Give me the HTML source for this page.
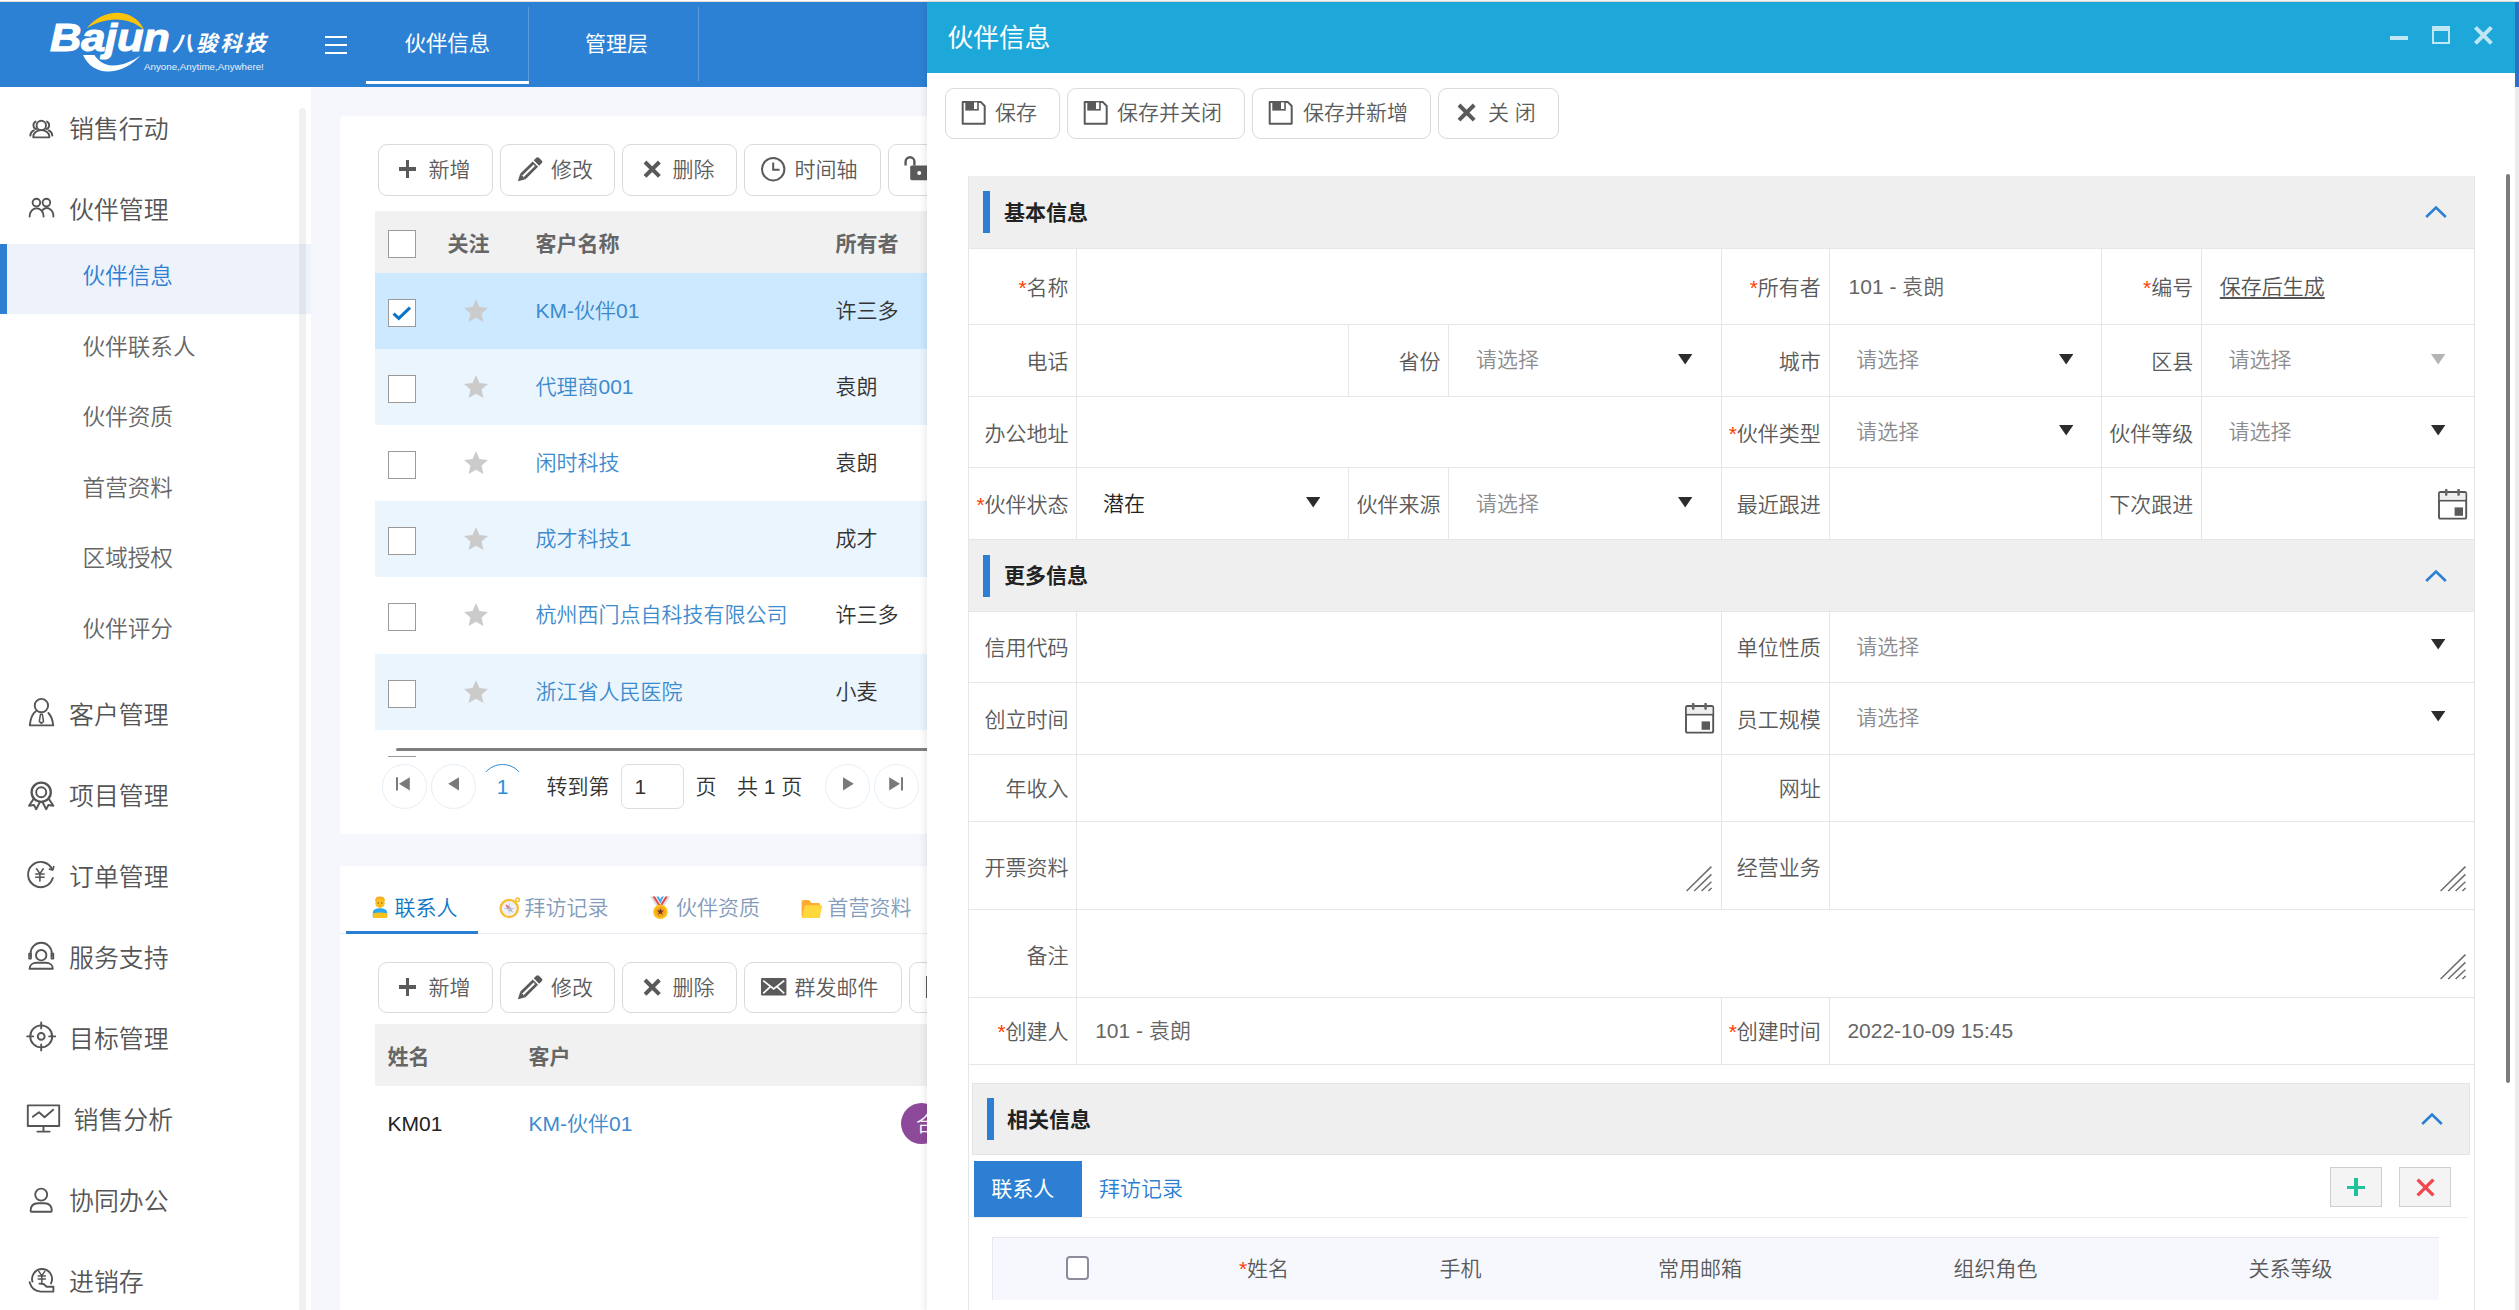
<!DOCTYPE html>
<html lang="zh-CN"><head><meta charset="utf-8"><title>伙伴信息</title>
<style>
*{box-sizing:border-box;margin:0;padding:0}
html,body{width:2519px;height:1310px;overflow:hidden;background:#fff}
body{font-weight:350;font-family:"Liberation Sans","Noto Sans CJK SC",sans-serif;position:relative;color:#555}
div,svg,header,aside,main,section{position:absolute}
header,aside,main,section{left:0;top:0;width:2519px;height:1310px}
.t{white-space:nowrap}
.btn{border:1px solid #dadada;border-radius:9px;background:#fff}
.r{color:#ff3d00}
</style></head>
<body>
<main>
<div style="left:311px;top:87px;width:2208px;height:1223px;background:#f5f7fc"></div>
<div style="left:340px;top:116px;width:1900px;height:718px;background:#fff;border-radius:5px 5px 0 0"></div>
<div class="btn" style="left:378px;top:144px;width:115px;height:52px;"></div><div style="left:398.8px;top:167.2px;width:17.4px;height:3.6px;background:#5a5a5a"></div><div style="left:405.7px;top:160.3px;width:3.6px;height:17.4px;background:#5a5a5a"></div><div class="t" style="top:149.5px;height:40px;line-height:40px;font-size:21px;color:#5c5c5c;left:428.5px;">新增</div>
<div class="btn" style="left:500px;top:144px;width:115px;height:52px;"></div><svg style="left:516.5px;top:156.6px;" width="27" height="26" viewBox="0 0 27 26"><g transform="translate(0.9,24.3) rotate(-44.5) scale(.935)" fill="#5a5a5a"><path d="M0 0L7.4 -4.1V4.1Z"/><path d="M7.4 -4.1H26.2V4.1H7.4Z M6.6 -1.1V1.1H24.6V-1.1Z" fill-rule="evenodd"/><path d="M27.8 -4.1H31.6Q33.8 -4.1 33.8 -1.9V1.9Q33.8 4.1 31.6 4.1H27.8Z"/></g></svg><div class="t" style="top:149.5px;height:40px;line-height:40px;font-size:21px;color:#5c5c5c;left:551px;">修改</div>
<div class="btn" style="left:622px;top:144px;width:115px;height:52px;"></div><svg style="left:642.5px;top:159.60000000000002px;" width="18.4" height="18.4" viewBox="0 0 18.4 18.4"><path d="M2 2L16.4 16.4M16.4 2L2 16.4" stroke="#5a5a5a" stroke-width="4" fill="none"/></svg><div class="t" style="top:149.5px;height:40px;line-height:40px;font-size:21px;color:#5c5c5c;left:672.5px;">删除</div>
<div class="btn" style="left:744px;top:144px;width:137px;height:52px;"></div><svg style="left:760.0px;top:155.70000000000002px;" width="26.4" height="26.4" viewBox="0 0 26.4 26.4"><circle cx="13.2" cy="13.2" r="11.2" fill="none" stroke="#5a5a5a" stroke-width="2"/><path d="M13.2 6.6V13.799999999999999H19.6" fill="none" stroke="#5a5a5a" stroke-width="2"/></svg><div class="t" style="top:149.5px;height:40px;line-height:40px;font-size:21px;color:#5c5c5c;left:794.6px;">时间轴</div>
<div class="btn" style="left:888px;top:144px;width:137px;height:52px;"></div><svg style="left:904.4px;top:156.4px;" width="30" height="26" viewBox="0 0 30 26"><path d="M1.6 9.6V5.6a4.4 4.4 0 0 1 8.8 0v4" fill="none" stroke="#5a5a5a" stroke-width="2.4"/><rect x="6.2" y="9.6" width="20" height="14.6" rx="1.6" fill="#5a5a5a"/><circle cx="15.2" cy="17" r="2" fill="#fff"/></svg><div class="t" style="top:150.0px;height:40px;line-height:40px;font-size:21px;color:#5c5c5c;left:950px;"></div>
<div style="left:375px;top:211px;width:1800px;height:62px;background:#f1f1f1"></div>
<div style="left:388px;top:230px;width:28px;height:28px;background:#fff;border:1.5px solid #9a9a9a"></div>
<div class="t" style="top:223.5px;height:40px;line-height:40px;font-size:21px;color:#666;font-weight:700;left:447.5px;">关注</div>
<div class="t" style="top:223.5px;height:40px;line-height:40px;font-size:21px;color:#666;font-weight:700;left:535.5px;">客户名称</div>
<div class="t" style="top:223.5px;height:40px;line-height:40px;font-size:21px;color:#666;font-weight:700;left:835.5px;">所有者</div>
<div style="left:375px;top:273px;width:1800px;height:76px;background:#cde9ff"></div>
<div style="left:388px;top:299px;width:28px;height:28px;background:#fff;border:1.5px solid #9a9a9a"></div><svg style="left:388px;top:299px;" width="28" height="28" viewBox="0 0 28 28"><path d="M5.6 14.6L10.8 19.4L22 8.6" fill="none" stroke="#0d76c9" stroke-width="3.2"/></svg>
<svg style="left:463.8px;top:298.6px;" width="24" height="24" viewBox="0 0 24 24"><path d="M12.0 0.2L15.5 8.0L24.0 8.9L17.6 14.6L19.4 23.0L12.0 18.7L4.6 23.0L6.4 14.6L0.0 8.9L8.5 8.0Z" fill="#cbcbcb"/></svg>
<div class="t" style="top:291.0px;height:40px;line-height:40px;font-size:21px;color:#3d8bcd;left:535.5px;">KM-伙伴01</div>
<div class="t" style="top:291.0px;height:40px;line-height:40px;font-size:21px;color:#333;left:835.5px;">许三多</div>
<div style="left:375px;top:349px;width:1800px;height:76px;background:#ebf5fe"></div>
<div style="left:388px;top:375px;width:28px;height:28px;background:#fff;border:1.5px solid #9a9a9a"></div>
<svg style="left:463.8px;top:374.6px;" width="24" height="24" viewBox="0 0 24 24"><path d="M12.0 0.2L15.5 8.0L24.0 8.9L17.6 14.6L19.4 23.0L12.0 18.7L4.6 23.0L6.4 14.6L0.0 8.9L8.5 8.0Z" fill="#cbcbcb"/></svg>
<div class="t" style="top:367.0px;height:40px;line-height:40px;font-size:21px;color:#3d8bcd;left:535.5px;">代理商001</div>
<div class="t" style="top:367.0px;height:40px;line-height:40px;font-size:21px;color:#333;left:835.5px;">袁朗</div>
<div style="left:375px;top:425px;width:1800px;height:76px;background:#fff"></div>
<div style="left:388px;top:451px;width:28px;height:28px;background:#fff;border:1.5px solid #9a9a9a"></div>
<svg style="left:463.8px;top:450.6px;" width="24" height="24" viewBox="0 0 24 24"><path d="M12.0 0.2L15.5 8.0L24.0 8.9L17.6 14.6L19.4 23.0L12.0 18.7L4.6 23.0L6.4 14.6L0.0 8.9L8.5 8.0Z" fill="#cbcbcb"/></svg>
<div class="t" style="top:443.0px;height:40px;line-height:40px;font-size:21px;color:#3d8bcd;left:535.5px;">闲时科技</div>
<div class="t" style="top:443.0px;height:40px;line-height:40px;font-size:21px;color:#333;left:835.5px;">袁朗</div>
<div style="left:375px;top:501px;width:1800px;height:76px;background:#ebf5fe"></div>
<div style="left:388px;top:527px;width:28px;height:28px;background:#fff;border:1.5px solid #9a9a9a"></div>
<svg style="left:463.8px;top:526.6px;" width="24" height="24" viewBox="0 0 24 24"><path d="M12.0 0.2L15.5 8.0L24.0 8.9L17.6 14.6L19.4 23.0L12.0 18.7L4.6 23.0L6.4 14.6L0.0 8.9L8.5 8.0Z" fill="#cbcbcb"/></svg>
<div class="t" style="top:519.0px;height:40px;line-height:40px;font-size:21px;color:#3d8bcd;left:535.5px;">成才科技1</div>
<div class="t" style="top:519.0px;height:40px;line-height:40px;font-size:21px;color:#333;left:835.5px;">成才</div>
<div style="left:375px;top:577px;width:1800px;height:76px;background:#fff"></div>
<div style="left:388px;top:603px;width:28px;height:28px;background:#fff;border:1.5px solid #9a9a9a"></div>
<svg style="left:463.8px;top:602.6px;" width="24" height="24" viewBox="0 0 24 24"><path d="M12.0 0.2L15.5 8.0L24.0 8.9L17.6 14.6L19.4 23.0L12.0 18.7L4.6 23.0L6.4 14.6L0.0 8.9L8.5 8.0Z" fill="#cbcbcb"/></svg>
<div class="t" style="top:595.0px;height:40px;line-height:40px;font-size:21px;color:#3d8bcd;left:535.5px;">杭州西门点自科技有限公司</div>
<div class="t" style="top:595.0px;height:40px;line-height:40px;font-size:21px;color:#333;left:835.5px;">许三多</div>
<div style="left:375px;top:654px;width:1800px;height:76px;background:#ebf5fe"></div>
<div style="left:388px;top:680px;width:28px;height:28px;background:#fff;border:1.5px solid #9a9a9a"></div>
<svg style="left:463.8px;top:679.6px;" width="24" height="24" viewBox="0 0 24 24"><path d="M12.0 0.2L15.5 8.0L24.0 8.9L17.6 14.6L19.4 23.0L12.0 18.7L4.6 23.0L6.4 14.6L0.0 8.9L8.5 8.0Z" fill="#cbcbcb"/></svg>
<div class="t" style="top:672.0px;height:40px;line-height:40px;font-size:21px;color:#3d8bcd;left:535.5px;">浙江省人民医院</div>
<div class="t" style="top:672.0px;height:40px;line-height:40px;font-size:21px;color:#333;left:835.5px;">小麦</div>
<div style="left:396px;top:747.6px;width:1800px;height:3.4px;background:#7f7f7f;border-radius:2px"></div>
<div style="left:388px;top:755.6px;width:28px;height:1.2px;background:#9a9a9a"></div>
<div style="left:382px;top:764px;width:44.6px;height:44.6px;border:1px solid #e6eff8;border-radius:50%"></div>
<div style="left:431px;top:764px;width:44.6px;height:44.6px;border:1px solid #e6eff8;border-radius:50%"></div>
<div style="left:825px;top:764px;width:44.6px;height:44.6px;border:1px solid #e6eff8;border-radius:50%"></div>
<div style="left:874px;top:764px;width:44.6px;height:44.6px;border:1px solid #e6eff8;border-radius:50%"></div>
<svg style="left:396px;top:776px;" width="16" height="16" viewBox="0 0 16 16"><path d="M1 1.2V14.4" stroke="#7a7a7a" stroke-width="2" fill="none"/><path d="M13.8 1.200000000000001V14.4L3 7.8Z" fill="#7a7a7a"/></svg>
<svg style="left:446px;top:776px;" width="16" height="16" viewBox="0 0 16 16"><path d="M13 1.2V14.4L2.2 7.8Z" fill="#7a7a7a"/></svg>
<svg style="left:841px;top:776px;" width="16" height="16" viewBox="0 0 16 16"><path d="M2 1.2V14.4L12.8 7.8Z" fill="#7a7a7a"/></svg>
<svg style="left:888px;top:776px;" width="16" height="16" viewBox="0 0 16 16"><path d="M14 1.2V14.4" stroke="#7a7a7a" stroke-width="2" fill="none"/><path d="M1.2 1.2V14.4L12 7.8Z" fill="#7a7a7a"/></svg>
<div style="left:480.2px;top:764px;width:44.6px;height:8.4px;overflow:hidden"><div style="left:0;top:0;width:44.6px;height:44.6px;border:1.4px solid #2b8fd8;border-radius:50%"></div></div>
<div class="t" style="top:766.5px;height:40px;line-height:40px;font-size:21px;color:#2b8fd8;left:482.6px;width:40px;text-align:center;">1</div>
<div class="t" style="top:766.5px;height:40px;line-height:40px;font-size:21px;color:#333;left:546.5px;">转到第</div>
<div style="left:621px;top:764px;width:63px;height:44.6px;border:1px solid #ddd;border-radius:7px;background:#fff"></div>
<div class="t" style="top:766.5px;height:40px;line-height:40px;font-size:21px;color:#333;left:634.5px;">1</div>
<div class="t" style="top:766.5px;height:40px;line-height:40px;font-size:21px;color:#333;left:695.5px;">页</div>
<div class="t" style="top:766.5px;height:40px;line-height:40px;font-size:21px;color:#333;left:737px;">共 1 页</div>
<div style="left:340px;top:866px;width:1900px;height:460px;background:#fff"></div>
<div style="left:340px;top:933px;width:1900px;height:1px;background:#e9edf5"></div>
<div style="left:346px;top:931px;width:132px;height:3px;background:#2b7fd3"></div>
<div class="t" style="top:887.5px;height:40px;line-height:40px;font-size:21px;color:#0f76c6;left:394.5px;">联系人</div>
<div class="t" style="top:887.5px;height:40px;line-height:40px;font-size:21px;color:#849cba;left:524.4px;">拜访记录</div>
<div class="t" style="top:887.5px;height:40px;line-height:40px;font-size:21px;color:#849cba;left:676px;">伙伴资质</div>
<div class="t" style="top:887.5px;height:40px;line-height:40px;font-size:21px;color:#849cba;left:827.6px;">首营资料</div>
<svg style="left:372px;top:896px;" width="17" height="23" viewBox="0 0 17 23"><path d="M3.2 5.2Q2.6 .8 8 .6Q13.4 .8 12.8 5.2Z" fill="#f9a825"/><circle cx="8" cy="7.2" r="4.7" fill="#fcc21b"/><circle cx="6.2" cy="7" r=".7" fill="#6d4c41"/><circle cx="9.8" cy="7" r=".7" fill="#6d4c41"/><path d="M7.2 9.2h1.6v1h-1.6z" fill="#ef7f5a"/><path d="M.8 21.6V16.8Q.8 12.2 8 12.2Q15.2 12.2 15.2 16.8V21.6Z" fill="#29a9f2"/><path d="M.8 17.4Q8 15.6 15.2 17.4V21.4Q8 22.6 .8 21.4Z" fill="#fcc21b"/></svg>
<svg style="left:498px;top:896px;" width="23" height="23" viewBox="0 0 23 23"><circle cx="11.2" cy="12.4" r="8.6" fill="#eef2f8" stroke="#f9bc2d" stroke-width="2.3"/><circle cx="19.6" cy="3.8" r="1.8" fill="#fff" stroke="#f9bc2d" stroke-width="1.4"/><path d="M7.4 8.2L12.2 11L9.8 13.6Z" fill="#ef4a5b"/><path d="M15.2 16.8L9.8 13.6L12.2 11Z" fill="#a9b4c8"/><path d="M11.2 6.6L12.2 11.6H10.2ZM11.2 18.2L10.2 13.2H12.2ZM5.4 12.4L10.4 11.4V13.4ZM17 12.4L12 13.4V11.4Z" fill="#b8c2d4"/></svg>
<svg style="left:650.4px;top:895.6px;" width="21" height="24" viewBox="0 0 21 24"><path d="M.2 .6H5L10.6 9.4H6Z" fill="#d9dde3"/><path d="M2.6 .6H5L10.6 9.4H8.4Z" fill="#e8483f"/><path d="M20.2 .6H15.4L9.8 9.4H14.4Z" fill="#d9dde3"/><path d="M17.8 .6H15.4L9.8 9.4H12Z" fill="#e8483f"/><path d="M6.4 .6H8.6L11.6 5.6L10.4 7.4Z" fill="#4aa3ea"/><path d="M14 .6H11.8L9.6 4.2L10.8 6Z" fill="#4aa3ea"/><circle cx="10.4" cy="15.8" r="7.3" fill="#fcc21b"/><circle cx="10.4" cy="15.8" r="5.3" fill="#f7a51c"/><path d="M10.4 12.2L11.4 14.6H14L11.9 16.2L12.7 18.8L10.4 17.3L8.1 18.8L8.9 16.2L6.800000000000001 14.6H9.4Z" fill="#6d3b2a"/></svg>
<svg style="left:800.6px;top:899px;" width="23" height="20" viewBox="0 0 23 20"><path d="M.6 2.8Q.6 .9 2.5 .9H7.2Q8 .9 8.6 1.6L10.6 4H17.4Q19.200000000000003 4 19.200000000000003 5.8V17Q19.200000000000003 19 17.2 19H2.6Q.6 19 .6 17Z" fill="#ffac33"/><path d="M5.4 6.2H20Q21.8 6.2 21.3 8L18.7 17.6Q18.3 19 16.900000000000002 19H2.2Q.9 19 1.3 17.6L3.6 7.6Q4 6.2 5.4 6.2Z" fill="#ffd93b"/></svg>
<div class="btn" style="left:378px;top:962px;width:115px;height:51px;"></div><div style="left:398.8px;top:985.2px;width:17.4px;height:3.6px;background:#5a5a5a"></div><div style="left:405.7px;top:978.3px;width:3.6px;height:17.4px;background:#5a5a5a"></div><div class="t" style="top:967.5px;height:40px;line-height:40px;font-size:21px;color:#5c5c5c;left:428.5px;">新增</div>
<div class="btn" style="left:500px;top:962px;width:115px;height:51px;"></div><svg style="left:516.5px;top:974.6px;" width="27" height="26" viewBox="0 0 27 26"><g transform="translate(0.9,24.3) rotate(-44.5) scale(.935)" fill="#5a5a5a"><path d="M0 0L7.4 -4.1V4.1Z"/><path d="M7.4 -4.1H26.2V4.1H7.4Z M6.6 -1.1V1.1H24.6V-1.1Z" fill-rule="evenodd"/><path d="M27.8 -4.1H31.6Q33.8 -4.1 33.8 -1.9V1.9Q33.8 4.1 31.6 4.1H27.8Z"/></g></svg><div class="t" style="top:967.5px;height:40px;line-height:40px;font-size:21px;color:#5c5c5c;left:551px;">修改</div>
<div class="btn" style="left:622px;top:962px;width:115px;height:51px;"></div><svg style="left:642.5px;top:977.5999999999999px;" width="18.4" height="18.4" viewBox="0 0 18.4 18.4"><path d="M2 2L16.4 16.4M16.4 2L2 16.4" stroke="#5a5a5a" stroke-width="4" fill="none"/></svg><div class="t" style="top:967.5px;height:40px;line-height:40px;font-size:21px;color:#5c5c5c;left:672.5px;">删除</div>
<div class="btn" style="left:744px;top:962px;width:158px;height:51px;"></div><svg style="left:761px;top:978px;" width="26" height="18" viewBox="0 0 26 18"><rect x="0" y="0" width="25.4" height="17.6" rx="1.4" fill="#5a5a5a"/><path d="M2.2 2.6L12.7 11L23.2 2.6M2.2 15.4L9.4 8.6M23.2 15.4L16 8.6" stroke="#fff" stroke-width="1.7" fill="none"/></svg><div class="t" style="top:967.5px;height:40px;line-height:40px;font-size:21px;color:#5c5c5c;left:794.6px;">群发邮件</div>
<div class="btn" style="left:909px;top:962px;width:137px;height:51px;"></div><div style="left:926px;top:976px;width:2.4px;height:22px;background:#5a5a5a"></div><div class="t" style="top:967.5px;height:40px;line-height:40px;font-size:21px;color:#5c5c5c;left:950px;"></div>
<div style="left:375px;top:1024px;width:1800px;height:62px;background:#f1f1f1"></div>
<div class="t" style="top:1036.5px;height:40px;line-height:40px;font-size:21px;color:#666;font-weight:700;left:387.5px;">姓名</div>
<div class="t" style="top:1036.5px;height:40px;line-height:40px;font-size:21px;color:#666;font-weight:700;left:528.5px;">客户</div>
<div class="t" style="top:1103.5px;height:40px;line-height:40px;font-size:21px;color:#222;left:387.5px;">KM01</div>
<div class="t" style="top:1103.5px;height:40px;line-height:40px;font-size:21px;color:#3d8bcd;left:528.5px;">KM-伙伴01</div>
<div style="left:901px;top:1103px;width:41px;height:41px;background:#8e4a9a;border-radius:50%"></div>
<div class="t" style="top:1103.5px;height:40px;line-height:40px;font-size:21px;color:#fff;left:916px;">合</div>
</main>
<header>
<div style="left:0px;top:0px;width:2519px;height:1px;background:#fff"></div>
<div style="left:0px;top:1px;width:2519px;height:1px;background:#e4dedc"></div>
<div style="left:0px;top:2px;width:2519px;height:85px;background:#2d81d4"></div>
<svg style="left:0;top:0" width="320" height="87" viewBox="0 0 320 87">
<path d="M86.5 28.5 C96 16 112 10.5 124 13.5 C134 16 141 22 144 30 C136 23 127 19.5 116 19.5 C105 19.5 95 23 86.5 28.5Z" fill="#fcc30b"/>
<path d="M83 55 C88 66 98 72 109 71.5 C122 71 133 64 140.5 55.5 C131 62 121 66 112 65.5 C104 65 98 61 94.5 55Z" fill="#fff"/>
</svg>
<div class="t" style="left:50px;top:15px;height:44px;line-height:44px;font-size:39.5px;font-weight:700;font-style:italic;color:#fff;letter-spacing:-0.2px;-webkit-text-stroke:1.1px #fff;transform-origin:0 50%;transform:scaleX(1.1)">Bajun</div>
<div class="t" style="left:172px;top:26.5px;height:34px;line-height:34px;font-size:21.5px;font-weight:700;font-style:italic;color:#fff;letter-spacing:2.6px">八骏科技</div>
<div class="t" style="left:144px;top:59.5px;height:14px;line-height:14px;font-size:9.75px;color:#e8f1fb;">Anyone,Anytime,Anywhere!</div>
<div style="left:325px;top:35.5px;width:21.5px;height:2.6px;background:#fff"></div>
<div style="left:325px;top:43.5px;width:21.5px;height:2.6px;background:#fff"></div>
<div style="left:325px;top:51.5px;width:21.5px;height:2.6px;background:#fff"></div>
<div class="t" style="top:24.0px;height:40px;line-height:40px;font-size:21.4px;color:#fff;left:247.3px;width:400px;text-align:center;font-weight:400;">伙伴信息</div>
<div class="t" style="top:24.0px;height:40px;line-height:40px;font-size:21px;color:#fff;left:416.5px;width:400px;text-align:center;font-weight:400;">管理层</div>
<div style="left:528px;top:7px;width:1px;height:74px;background:rgba(255,255,255,.22)"></div>
<div style="left:698px;top:7px;width:1px;height:74px;background:rgba(255,255,255,.22)"></div>
<div style="left:366px;top:81px;width:163px;height:3px;background:#fff"></div>
</header>
<aside>
<div style="left:0px;top:87px;width:311px;height:1223px;background:#fff"></div>
<div style="left:0px;top:244px;width:311px;height:70px;background:#eef3fb"></div>
<div style="left:0px;top:244px;width:7px;height:70px;background:#2d7fd3"></div>
<div style="left:299px;top:108px;width:7px;height:1210px;background:rgba(0,0,0,.06);border-radius:4px"></div>
<div class="t" style="top:108.6px;height:40px;line-height:40px;font-size:24.9px;color:#555;left:69px;">销售行动</div>
<div class="t" style="top:189.5px;height:40px;line-height:40px;font-size:24.9px;color:#555;left:69px;">伙伴管理</div>
<div class="t" style="top:695.1px;height:40px;line-height:40px;font-size:24.9px;color:#555;left:69px;">客户管理</div>
<div class="t" style="top:776.4px;height:40px;line-height:40px;font-size:24.9px;color:#555;left:69px;">项目管理</div>
<div class="t" style="top:857.4px;height:40px;line-height:40px;font-size:24.9px;color:#555;left:69px;">订单管理</div>
<div class="t" style="top:938.4px;height:40px;line-height:40px;font-size:24.9px;color:#555;left:69px;">服务支持</div>
<div class="t" style="top:1019.4000000000001px;height:40px;line-height:40px;font-size:24.9px;color:#555;left:69px;">目标管理</div>
<div class="t" style="top:1100.4px;height:40px;line-height:40px;font-size:24.9px;color:#555;left:73.5px;">销售分析</div>
<div class="t" style="top:1181.4px;height:40px;line-height:40px;font-size:24.9px;color:#555;left:69px;">协同办公</div>
<div class="t" style="top:1262.4px;height:40px;line-height:40px;font-size:24.9px;color:#555;left:69px;">进销存</div>
<div class="t" style="top:257.0px;height:40px;line-height:40px;font-size:22.6px;color:#2d7fd3;left:82.6px;">伙伴信息</div>
<div class="t" style="top:328.3px;height:40px;line-height:40px;font-size:22.6px;color:#666;left:82.6px;">伙伴联系人</div>
<div class="t" style="top:398.3px;height:40px;line-height:40px;font-size:22.6px;color:#666;left:82.6px;">伙伴资质</div>
<div class="t" style="top:469.3px;height:40px;line-height:40px;font-size:22.6px;color:#666;left:82.6px;">首营资料</div>
<div class="t" style="top:539.3px;height:40px;line-height:40px;font-size:22.6px;color:#666;left:82.6px;">区域授权</div>
<div class="t" style="top:610.3px;height:40px;line-height:40px;font-size:22.6px;color:#666;left:82.6px;">伙伴评分</div>
<svg style="left:0;top:0" width="320" height="1310" viewBox="0 0 320 1310"><g fill="none" stroke="#555" stroke-width="1.9" stroke-linecap="round" stroke-linejoin="round"><circle cx="41.3" cy="125.4" r="4.7"/><path d="M33.3 137.4v-.9a8 6.4 0 0 1 16 0v.9z"/><path d="M36.2 129.2a4.2 4.2 0 0 1 -.6-7.6"/><path d="M46.4 129.2a4.2 4.2 0 0 0 .6-7.6"/><path d="M30.3 135.6a6.5 6 0 0 1 3.6-5.2"/><path d="M52.3 135.6a6.5 6 0 0 0 -3.6-5.2"/></g><g fill="none" stroke="#555" stroke-width="1.9" stroke-linecap="round" stroke-linejoin="round"><circle cx="36.4" cy="202.6" r="3.8"/><circle cx="46.4" cy="202.6" r="3.8"/><path d="M29.6 216.6a7 8.4 0 0 1 14 0"/><path d="M42.6 210a6.6 8 0 0 1 10.8 6.6"/></g><g fill="none" stroke="#555" stroke-width="1.9" stroke-linecap="round" stroke-linejoin="round"><circle cx="41.4" cy="705.6" r="6.7"/><path d="M35.8 711.2c-3.800000000000001 2.8-5.4 7.4-6 14.200000000000001h23.4c-.5-5.2-1.8-9.200000000000001-4.8-12.4"/><path d="M40.5 714.2h1.8l1.2 7.2-2.1 2-2.1-2z" stroke-width="1.5"/></g><g fill="none" stroke="#555" stroke-width="1.9" stroke-linecap="round" stroke-linejoin="round"><circle cx="41.2" cy="792.2" r="9.6" stroke-width="2.3"/><circle cx="41.2" cy="792.2" r="5"/><path d="M33.8 798.6l-4.8 7.2 5-.8 2.2 4.2 3.6-7"/><path d="M48.6 798.6l4.8 7.2-5-.8-2.2 4.2-3.6-7"/></g><g fill="none" stroke="#555" stroke-width="1.9" stroke-linecap="round" stroke-linejoin="round" transform="translate(-1.1 -1.2)"><path d="M53.3 870.6a12.6 12.6 0 1 0 .6 8.6"/><path d="M50.6 870.3l3.3.8.9-3.4" stroke-width="1.7"/><g stroke-width="1.6"><path d="M37.6 870l3.4 4.8 3.4-4.8M36.8 875.2h8.4M36.8 878.4h8.4M41 874.8v7.4"/></g></g><g fill="none" stroke="#555" stroke-width="1.9" stroke-linecap="round" stroke-linejoin="round"><circle cx="41.2" cy="955.2" r="5.2"/><path d="M30.6 956.4v-3a10.6 10.6 0 0 1 21.2 0v3"/><path d="M29 953.6h2v5.2h-2zM51.4 953.6h2v5.2h-2z" stroke-width="1.6"/><path d="M29.6 968.8c0-3.6 3-6 7-6h9.200000000000001c4 0 7 2.4 7 6z"/></g><g fill="none" stroke="#555" stroke-width="1.9" stroke-linecap="round" stroke-linejoin="round"><circle cx="41.2" cy="1036.4" r="11"/><circle cx="41.2" cy="1036.4" r="3.4"/><path d="M41.2 1022.4v6M41.2 1044.4v6M27.2 1036.4h6M49.2 1036.4h6"/></g><g fill="none" stroke="#555" stroke-width="1.9" stroke-linecap="round" stroke-linejoin="round" stroke-linejoin="miter"><path d="M27.8 1105.4h31.4v20.6h-31.4z"/><path d="M43.5 1126v5.4M37.4 1131.6h12.2"/><path d="M32.8 1116.8l6.2-4.6 5.6 5 8.6-7.400000000000001"/></g><g fill="none" stroke="#555" stroke-width="1.9" stroke-linecap="round" stroke-linejoin="round"><circle cx="41.2" cy="1194.6" r="6"/><path d="M30.6 1210.8c0-5 3-7.6 7.4-7.6h6.4c4.4 0 7.4 2.6 7.4 7.6 0 .6-.4 1-1 1h-19.200000000000003c-.6 0-1-.4-1-1z"/></g><g fill="none" stroke="#555" stroke-width="1.9" stroke-linecap="round" stroke-linejoin="round"><path d="M32.4 1281.6a10 10 0 1 1 18.6 1.8"/><g stroke-width="1.5"><path d="M38.8 1271.4l3 4.2 3-4.2M38.2 1276h7.2M38.2 1279h7.2M41.8 1275.6v7.6"/></g><path d="M29.6 1282.2c1.6 5.6 5.6 9.200000000000001 11.4 9.4h12.4v-4.8h-6.8l-3-2.8-4.2-.4"/></g></svg>
</aside>
<section class="dialog">
<div style="left:927px;top:2px;width:1588px;height:1310px;background:#fff;box-shadow:-1px 0 8px rgba(0,0,0,.11)"></div>
<div style="left:927px;top:2px;width:1588px;height:71px;background:#1da8d9"></div>
<div class="t" style="top:17.799999999999997px;height:40px;line-height:40px;font-size:25.7px;color:#fff;left:947.6px;font-weight:400;">伙伴信息</div>
<div style="left:2390px;top:36px;width:18px;height:4.2px;background:rgba(255,255,255,.72)"></div>
<div style="left:2432px;top:26.4px;width:18px;height:17.6px;border:2px solid rgba(255,255,255,.72);border-top-width:5px"></div>
<svg style="left:2472px;top:24px;" width="23" height="23" viewBox="0 0 23 23"><path d="M3.4 3.4L19.4 19.4M19.4 3.4L3.4 19.4" stroke="rgba(255,255,255,.72)" stroke-width="4" fill="none"/></svg>
<div class="btn" style="left:945px;top:88px;width:115px;height:50.6px;"></div><svg style="left:961.0px;top:100.0px;" width="26" height="26" viewBox="0 0 26 26"><path d="M1.7 2.1H19.9L23.7 6V23.7H1.7Z" fill="none" stroke="#5a5a5a" stroke-width="2" stroke-linejoin="round"/><path d="M4.3 2.1H17.8V10.6H4.3Z" fill="#5a5a5a"/><path d="M13 2.4H16.2V9H13Z" fill="#fff"/></svg><div class="t" style="top:93.0px;height:40px;line-height:40px;font-size:21px;color:#5c5c5c;left:995px;">保存</div>
<div class="btn" style="left:1067px;top:88px;width:178px;height:50.6px;"></div><svg style="left:1083.0px;top:100.0px;" width="26" height="26" viewBox="0 0 26 26"><path d="M1.7 2.1H19.9L23.7 6V23.7H1.7Z" fill="none" stroke="#5a5a5a" stroke-width="2" stroke-linejoin="round"/><path d="M4.3 2.1H17.8V10.6H4.3Z" fill="#5a5a5a"/><path d="M13 2.4H16.2V9H13Z" fill="#fff"/></svg><div class="t" style="top:93.0px;height:40px;line-height:40px;font-size:21px;color:#5c5c5c;left:1117px;">保存并关闭</div>
<div class="btn" style="left:1252px;top:88px;width:178.8px;height:50.6px;"></div><svg style="left:1268.3999999999999px;top:100.0px;" width="26" height="26" viewBox="0 0 26 26"><path d="M1.7 2.1H19.9L23.7 6V23.7H1.7Z" fill="none" stroke="#5a5a5a" stroke-width="2" stroke-linejoin="round"/><path d="M4.3 2.1H17.8V10.6H4.3Z" fill="#5a5a5a"/><path d="M13 2.4H16.2V9H13Z" fill="#fff"/></svg><div class="t" style="top:93.0px;height:40px;line-height:40px;font-size:21px;color:#5c5c5c;left:1303px;">保存并新增</div>
<div class="btn" style="left:1438px;top:88px;width:121px;height:50.6px;"></div><svg style="left:1457.0px;top:103.4px;" width="19.2" height="19.2" viewBox="0 0 19.2 19.2"><path d="M2 2L17.2 17.2M17.2 2L2 17.2" stroke="#5a5a5a" stroke-width="4" fill="none"/></svg><div class="t" style="top:93.0px;height:40px;line-height:40px;font-size:21px;color:#5c5c5c;left:1488px;">关 闭</div>
<div style="left:968px;top:176px;width:1px;height:1140px;background:#e6e6e6"></div>
<div style="left:2474px;top:176px;width:1px;height:1140px;background:#e6e6e6"></div>
<div style="left:969px;top:176px;width:1505px;height:72px;background:#efefef;"></div><div style="left:982.8px;top:191px;width:7px;height:42px;background:#2d7fd3"></div><div class="t" style="top:192.8px;height:40px;line-height:40px;font-size:21px;color:#222;font-weight:700;left:1004px;">基本信息</div><svg style="left:2423.5px;top:204.0px;" width="24" height="16" viewBox="0 0 24 16"><path d="M2.2 13L12 3.6L21.8 13" fill="none" stroke="#2d7fd3" stroke-width="2.6"/></svg>
<div style="left:968px;top:248px;width:1507px;height:1px;background:#e6e6e6"></div>
<div style="left:968px;top:324px;width:1507px;height:1px;background:#e6e6e6"></div>
<div style="left:968px;top:396px;width:1507px;height:1px;background:#e6e6e6"></div>
<div style="left:968px;top:467px;width:1507px;height:1px;background:#e6e6e6"></div>
<div style="left:968px;top:539px;width:1507px;height:1px;background:#e6e6e6"></div>
<div style="left:1076px;top:248px;width:1px;height:291px;background:#e6e6e6"></div>
<div style="left:1721px;top:248px;width:1px;height:291px;background:#e6e6e6"></div>
<div style="left:1829px;top:248px;width:1px;height:291px;background:#e6e6e6"></div>
<div style="left:2101px;top:248px;width:1px;height:291px;background:#e6e6e6"></div>
<div style="left:2201px;top:248px;width:1px;height:291px;background:#e6e6e6"></div>
<div style="left:1348px;top:324px;width:1px;height:72px;background:#e6e6e6"></div>
<div style="left:1448px;top:324px;width:1px;height:72px;background:#e6e6e6"></div>
<div style="left:1348px;top:467px;width:1px;height:72px;background:#e6e6e6"></div>
<div style="left:1448px;top:467px;width:1px;height:72px;background:#e6e6e6"></div>
<div class="t" style="top:268.25px;height:40px;line-height:40px;font-size:21px;color:#5a5a5a;right:1450.4px;text-align:right;"><span class="r">*</span>名称</div>
<div class="t" style="top:268.25px;height:40px;line-height:40px;font-size:21px;color:#5a5a5a;right:698.2px;text-align:right;"><span class="r">*</span>所有者</div>
<div class="t" style="top:266.79999999999995px;height:40px;line-height:40px;font-size:21px;color:#666;left:1848.6px;">101 - 袁朗</div>
<div class="t" style="top:268.25px;height:40px;line-height:40px;font-size:21px;color:#5a5a5a;right:325.8000000000002px;text-align:right;"><span class="r">*</span>编号</div>
<div class="t" style="top:266.79999999999995px;height:40px;line-height:40px;font-size:21px;color:#555;left:2219.8px;text-decoration:underline;text-underline-offset:3px;text-decoration-thickness:1.6px">保存后生成</div>
<div class="t" style="top:342.25px;height:40px;line-height:40px;font-size:21px;color:#5a5a5a;right:1450.4px;text-align:right;">电话</div>
<div class="t" style="top:342.25px;height:40px;line-height:40px;font-size:21px;color:#5a5a5a;right:1078.6px;text-align:right;">省份</div>
<div class="t" style="top:339.9px;height:40px;line-height:40px;font-size:21px;color:#8c8c8c;left:1476px;">请选择</div>
<svg style="left:1678.2px;top:353.59999999999997px;" width="14.4" height="11" viewBox="0 0 14.4 11"><path d="M0 0H14.4L7.2 10.6Z" fill="#2c2c2c"/></svg>
<div class="t" style="top:342.25px;height:40px;line-height:40px;font-size:21px;color:#5a5a5a;right:698.2px;text-align:right;">城市</div>
<div class="t" style="top:339.9px;height:40px;line-height:40px;font-size:21px;color:#8c8c8c;left:1856.2px;">请选择</div>
<svg style="left:2058.6px;top:353.59999999999997px;" width="14.4" height="11" viewBox="0 0 14.4 11"><path d="M0 0H14.4L7.2 10.6Z" fill="#2c2c2c"/></svg>
<div class="t" style="top:342.25px;height:40px;line-height:40px;font-size:21px;color:#5a5a5a;right:325.8000000000002px;text-align:right;">区县</div>
<div class="t" style="top:339.9px;height:40px;line-height:40px;font-size:21px;color:#8c8c8c;left:2228.6px;">请选择</div>
<svg style="left:2431px;top:353.59999999999997px;" width="14.4" height="11" viewBox="0 0 14.4 11"><path d="M0 0H14.4L7.2 10.6Z" fill="#b4b4b4"/></svg>
<div class="t" style="top:413.75px;height:40px;line-height:40px;font-size:21px;color:#5a5a5a;right:1450.4px;text-align:right;">办公地址</div>
<div class="t" style="top:413.75px;height:40px;line-height:40px;font-size:21px;color:#5a5a5a;right:698.2px;text-align:right;"><span class="r">*</span>伙伴类型</div>
<div class="t" style="top:412.29999999999995px;height:40px;line-height:40px;font-size:21px;color:#8c8c8c;left:1856.2px;">请选择</div>
<svg style="left:2058.6px;top:425.09999999999997px;" width="14.4" height="11" viewBox="0 0 14.4 11"><path d="M0 0H14.4L7.2 10.6Z" fill="#2c2c2c"/></svg>
<div class="t" style="top:413.75px;height:40px;line-height:40px;font-size:21px;color:#5a5a5a;right:325.8000000000002px;text-align:right;">伙伴等级</div>
<div class="t" style="top:412.29999999999995px;height:40px;line-height:40px;font-size:21px;color:#8c8c8c;left:2228.6px;">请选择</div>
<svg style="left:2431px;top:425.09999999999997px;" width="14.4" height="11" viewBox="0 0 14.4 11"><path d="M0 0H14.4L7.2 10.6Z" fill="#2c2c2c"/></svg>
<div class="t" style="top:485.25px;height:40px;line-height:40px;font-size:21px;color:#5a5a5a;right:1450.4px;text-align:right;"><span class="r">*</span>伙伴状态</div>
<div class="t" style="top:483.79999999999995px;height:40px;line-height:40px;font-size:21px;color:#222;left:1103px;">潜在</div>
<svg style="left:1306px;top:496.59999999999997px;" width="14.4" height="11" viewBox="0 0 14.4 11"><path d="M0 0H14.4L7.2 10.6Z" fill="#2c2c2c"/></svg>
<div class="t" style="top:485.25px;height:40px;line-height:40px;font-size:21px;color:#5a5a5a;right:1078.6px;text-align:right;">伙伴来源</div>
<div class="t" style="top:483.79999999999995px;height:40px;line-height:40px;font-size:21px;color:#8c8c8c;left:1476px;">请选择</div>
<svg style="left:1678.2px;top:496.59999999999997px;" width="14.4" height="11" viewBox="0 0 14.4 11"><path d="M0 0H14.4L7.2 10.6Z" fill="#2c2c2c"/></svg>
<div class="t" style="top:485.25px;height:40px;line-height:40px;font-size:21px;color:#5a5a5a;right:698.2px;text-align:right;">最近跟进</div>
<div class="t" style="top:485.25px;height:40px;line-height:40px;font-size:21px;color:#5a5a5a;right:325.8000000000002px;text-align:right;">下次跟进</div>
<svg style="left:2437px;top:488.5px;" width="31" height="32" viewBox="0 0 31 32"><rect x="2" y="3" width="27.2" height="26.6" rx="1.6" fill="#fff" stroke="#555" stroke-width="1.9"/><path d="M2.8 4H28.4V11H2.8Z" fill="#eee"/><path d="M2 11.7H29.2" stroke="#555" stroke-width="1.6"/><path d="M9.2 1V5.6M21.6 1V5.6" stroke="#666" stroke-width="2.6" stroke-linecap="round"/><rect x="17.6" y="18.4" width="8.4" height="8.4" fill="#5a5a5a"/></svg>
<div style="left:969px;top:540px;width:1505px;height:71px;background:#efefef;"></div><div style="left:982.8px;top:555px;width:7px;height:42px;background:#2d7fd3"></div><div class="t" style="top:556.3px;height:40px;line-height:40px;font-size:21px;color:#222;font-weight:700;left:1004px;">更多信息</div><svg style="left:2423.5px;top:567.5px;" width="24" height="16" viewBox="0 0 24 16"><path d="M2.2 13L12 3.6L21.8 13" fill="none" stroke="#2d7fd3" stroke-width="2.6"/></svg>
<div style="left:968px;top:611px;width:1507px;height:1px;background:#e6e6e6"></div>
<div style="left:968px;top:682px;width:1507px;height:1px;background:#e6e6e6"></div>
<div style="left:968px;top:754px;width:1507px;height:1px;background:#e6e6e6"></div>
<div style="left:968px;top:821px;width:1507px;height:1px;background:#e6e6e6"></div>
<div style="left:968px;top:909px;width:1507px;height:1px;background:#e6e6e6"></div>
<div style="left:968px;top:997px;width:1507px;height:1px;background:#e6e6e6"></div>
<div style="left:968px;top:1064px;width:1507px;height:1px;background:#e6e6e6"></div>
<div style="left:1076px;top:611px;width:1px;height:453px;background:#e6e6e6"></div>
<div style="left:1721px;top:611px;width:1px;height:298px;background:#e6e6e6"></div>
<div style="left:1721px;top:997px;width:1px;height:67px;background:#e6e6e6"></div>
<div style="left:1829px;top:611px;width:1px;height:298px;background:#e6e6e6"></div>
<div style="left:1829px;top:997px;width:1px;height:67px;background:#e6e6e6"></div>
<div class="t" style="top:628.0500000000001px;height:40px;line-height:40px;font-size:21px;color:#5a5a5a;right:1450.4px;text-align:right;">信用代码</div>
<div class="t" style="top:628.0500000000001px;height:40px;line-height:40px;font-size:21px;color:#5a5a5a;right:698.2px;text-align:right;">单位性质</div>
<div class="t" style="top:626.6px;height:40px;line-height:40px;font-size:21px;color:#8c8c8c;left:1856.2px;">请选择</div>
<svg style="left:2431px;top:639.4000000000001px;" width="14.4" height="11" viewBox="0 0 14.4 11"><path d="M0 0H14.4L7.2 10.6Z" fill="#2c2c2c"/></svg>
<div class="t" style="top:699.5500000000001px;height:40px;line-height:40px;font-size:21px;color:#5a5a5a;right:1450.4px;text-align:right;">创立时间</div>
<svg style="left:1684px;top:703.2px;" width="31" height="32" viewBox="0 0 31 32"><rect x="2" y="3" width="27.2" height="26.6" rx="1.6" fill="#fff" stroke="#555" stroke-width="1.9"/><path d="M2.8 4H28.4V11H2.8Z" fill="#eee"/><path d="M2 11.7H29.2" stroke="#555" stroke-width="1.6"/><path d="M9.2 1V5.6M21.6 1V5.6" stroke="#666" stroke-width="2.6" stroke-linecap="round"/><rect x="17.6" y="18.4" width="8.4" height="8.4" fill="#5a5a5a"/></svg>
<div class="t" style="top:699.5500000000001px;height:40px;line-height:40px;font-size:21px;color:#5a5a5a;right:698.2px;text-align:right;">员工规模</div>
<div class="t" style="top:698.1px;height:40px;line-height:40px;font-size:21px;color:#8c8c8c;left:1856.2px;">请选择</div>
<svg style="left:2431px;top:710.9000000000001px;" width="14.4" height="11" viewBox="0 0 14.4 11"><path d="M0 0H14.4L7.2 10.6Z" fill="#2c2c2c"/></svg>
<div class="t" style="top:769.0500000000001px;height:40px;line-height:40px;font-size:21px;color:#5a5a5a;right:1450.4px;text-align:right;">年收入</div>
<div class="t" style="top:769.0500000000001px;height:40px;line-height:40px;font-size:21px;color:#5a5a5a;right:698.2px;text-align:right;">网址</div>
<div class="t" style="top:847.5500000000001px;height:40px;line-height:40px;font-size:21px;color:#5a5a5a;right:1450.4px;text-align:right;">开票资料</div>
<svg style="left:1686.4px;top:865.6px;" width="27" height="26" viewBox="0 0 27 26"><path d="M.6 25L25.4 .6M8.2 25L25.4 8.4M15.6 25L25.4 15.8M22.4 25L25.6 22" stroke="#6e6e6e" stroke-width="1.5" fill="none"/></svg>
<div class="t" style="top:847.5500000000001px;height:40px;line-height:40px;font-size:21px;color:#5a5a5a;right:698.2px;text-align:right;">经营业务</div>
<svg style="left:2440px;top:865.6px;" width="27" height="26" viewBox="0 0 27 26"><path d="M.6 25L25.4 .6M8.2 25L25.4 8.4M15.6 25L25.4 15.8M22.4 25L25.6 22" stroke="#6e6e6e" stroke-width="1.5" fill="none"/></svg>
<div class="t" style="top:935.5500000000001px;height:40px;line-height:40px;font-size:21px;color:#5a5a5a;right:1450.4px;text-align:right;">备注</div>
<svg style="left:2440px;top:953.6px;" width="27" height="26" viewBox="0 0 27 26"><path d="M.6 25L25.4 .6M8.2 25L25.4 8.4M15.6 25L25.4 15.8M22.4 25L25.6 22" stroke="#6e6e6e" stroke-width="1.5" fill="none"/></svg>
<div class="t" style="top:1012.05px;height:40px;line-height:40px;font-size:21px;color:#5a5a5a;right:1450.4px;text-align:right;"><span class="r">*</span>创建人</div>
<div class="t" style="top:1010.6000000000001px;height:40px;line-height:40px;font-size:21px;color:#666;left:1095.2px;">101 - 袁朗</div>
<div class="t" style="top:1012.05px;height:40px;line-height:40px;font-size:21px;color:#5a5a5a;right:698.2px;text-align:right;"><span class="r">*</span>创建时间</div>
<div class="t" style="top:1010.6000000000001px;height:40px;line-height:40px;font-size:21px;color:#666;left:1847.4px;">2022-10-09 15:45</div>
<div style="left:972px;top:1083px;width:1498px;height:71.6px;background:#efefef;border:1px solid #e4e4e4"></div><div style="left:987px;top:1098px;width:7px;height:42px;background:#2d7fd3"></div><div class="t" style="top:1099.6px;height:40px;line-height:40px;font-size:21px;color:#222;font-weight:700;left:1007px;">相关信息</div><svg style="left:2419.5px;top:1110.8px;" width="24" height="16" viewBox="0 0 24 16"><path d="M2.2 13L12 3.6L21.8 13" fill="none" stroke="#2d7fd3" stroke-width="2.6"/></svg>
<div style="left:974px;top:1217px;width:1494px;height:1.2px;background:#ececec"></div>
<div style="left:974px;top:1161px;width:108px;height:56px;background:#2d7fd3"></div>
<div class="t" style="top:1168.6px;height:40px;line-height:40px;font-size:21px;color:#fff;left:991.2px;font-weight:400;">联系人</div>
<div class="t" style="top:1168.6px;height:40px;line-height:40px;font-size:21px;color:#2d7fd3;left:1099px;">拜访记录</div>
<div style="left:2330.4px;top:1167.4px;width:52px;height:39.6px;background:#f4f4f4;border:1px solid #cfcfcf"></div>
<div style="left:2399.4px;top:1167.4px;width:52px;height:39.6px;background:#f4f4f4;border:1px solid #cfcfcf"></div>
<div style="left:2346.8px;top:1185.6px;width:18.4px;height:3.2px;background:#1fc29b"></div>
<div style="left:2354.4px;top:1178px;width:3.2px;height:18.4px;background:#1fc29b"></div>
<svg style="left:2414px;top:1176px;" width="23" height="23" viewBox="0 0 23 23"><path d="M3.6 3.6L19.4 19.4M19.4 3.6L3.6 19.4" stroke="#f0484e" stroke-width="3.4" fill="none"/></svg>
<div style="left:992px;top:1236.6px;width:1447px;height:63px;background:#f7f8fd;border-top:1px solid #e7e9f0;border-left:1px solid #e7e9f0"></div>
<div style="left:1066px;top:1256.4px;width:23.4px;height:23.4px;background:#fff;border:2.4px solid #8c8c9c;border-radius:4px"></div>
<div class="t" style="top:1249.0px;height:40px;line-height:40px;font-size:21px;color:#5a5a5a;left:1064.0px;width:400px;text-align:center;"><span class="r">*</span>姓名</div>
<div class="t" style="top:1249.0px;height:40px;line-height:40px;font-size:21px;color:#5a5a5a;left:1260.4px;width:400px;text-align:center;">手机</div>
<div class="t" style="top:1249.0px;height:40px;line-height:40px;font-size:21px;color:#5a5a5a;left:1500.0px;width:400px;text-align:center;">常用邮箱</div>
<div class="t" style="top:1249.0px;height:40px;line-height:40px;font-size:21px;color:#5a5a5a;left:1795.6px;width:400px;text-align:center;">组织角色</div>
<div class="t" style="top:1249.0px;height:40px;line-height:40px;font-size:21px;color:#5a5a5a;left:2090.6px;width:400px;text-align:center;">关系等级</div>
<div style="left:2506.2px;top:174px;width:4px;height:908.6px;background:#7c7c7c;border-radius:2px"></div>
<div style="left:2515px;top:87px;width:4px;height:1223px;background:#ebebf0"></div>
<div style="left:2515px;top:2px;width:4px;height:85px;background:#2b72c6"></div>
</section>
</body></html>
